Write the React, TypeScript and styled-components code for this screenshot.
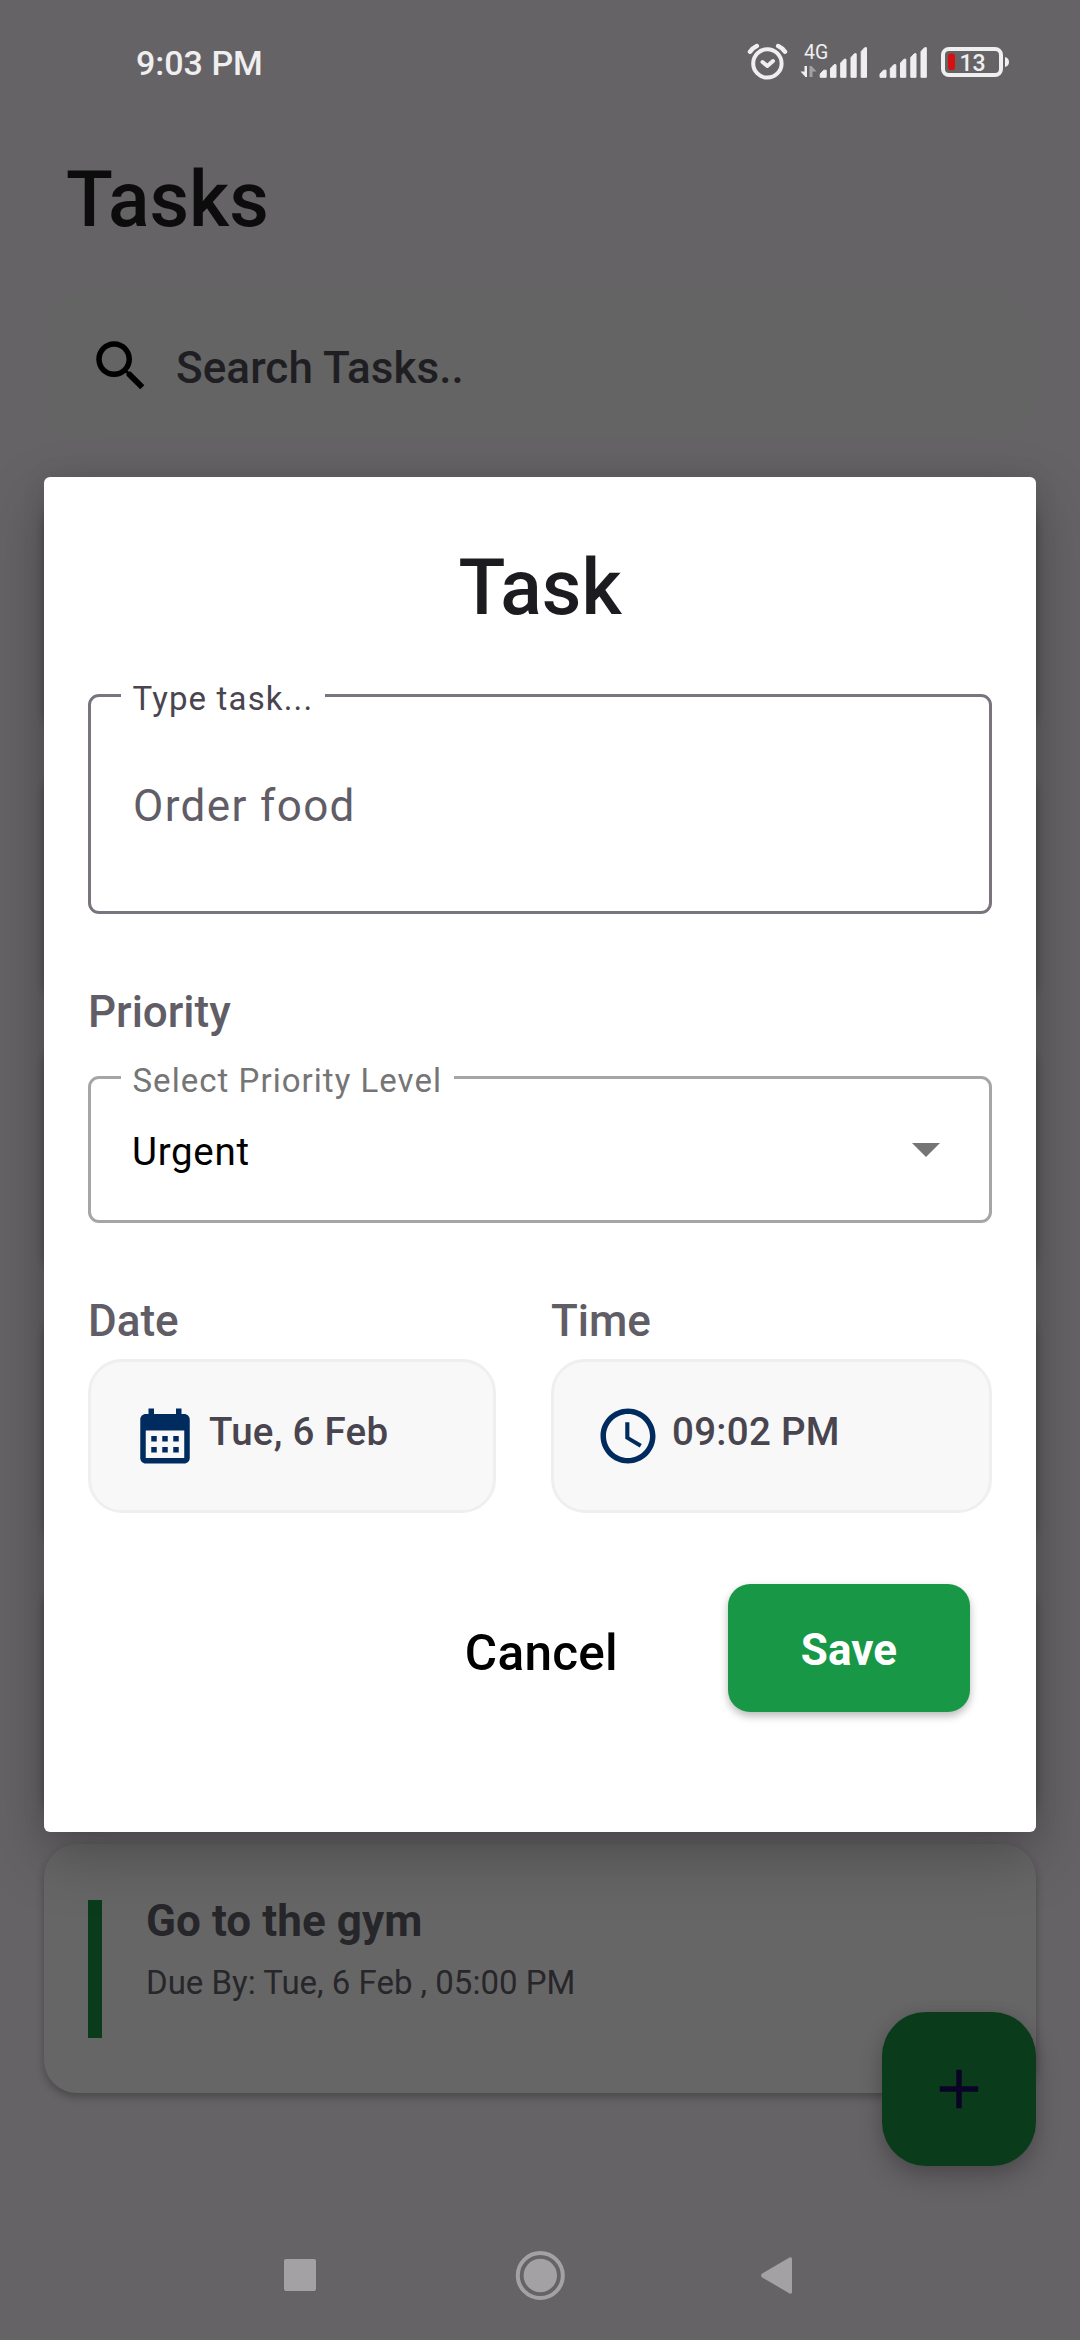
import React from "react";
import styled, { createGlobalStyle } from "styled-components";

const GlobalStyle = createGlobalStyle`
  * { box-sizing: border-box; }
  body { margin: 0; background: #666367; }
  button { border: 0; padding: 0; background: none; font-family: inherit; }
`;

const Screen = styled.div`
  position: relative;
  width: 1080px;
  height: 2340px;
  display: flex;
  flex-direction: column;
  overflow: hidden;
  background: #666367;
  font-family: Roboto, "Liberation Sans", sans-serif;
`;

const StatusBar = styled.header`
  height: 126px;
  padding: 0 70px 0 136px;
  display: flex;
  justify-content: space-between;
  color: #f0eff0;
`;

const Clock = styled.span`
  padding-top: 43px;
  font-size: 34px;
  line-height: 40px;
  font-weight: 500;
  white-space: nowrap;
`;

const StatusIcons = styled.svg`
  display: block;
  width: 270px;
  height: 126px;
  flex: none;
`;

const PageTitle = styled.h1`
  margin: 29px 0 0 66px;
  font-size: 77px;
  line-height: 90px;
  font-weight: 500;
  color: #0c0c0d;
`;

const SearchBar = styled.div`
  margin: 45px 44px 0;
  height: 152px;
  padding: 0 44px;
  display: flex;
  align-items: center;
  gap: 22px;
  border-radius: 44px;
  background: #636463;
`;

const SearchHint = styled.span`
  font-size: 44px;
  line-height: 52px;
  padding-top: 3px;
  font-weight: 500;
  letter-spacing: 0.07px;
  color: #1f1e23;
`;

const Glyph = styled.svg<{ $color: string }>`
  display: block;
  flex: none;
  width: 66px;
  height: 66px;
  fill: ${(p) => p.$color};
`;

const TaskList = styled.main`
  flex: 1;
  padding: 0 44px 99px;
  display: flex;
  flex-direction: column;
  justify-content: flex-end;
  gap: 22px;
`;

const TaskCard = styled.article`
  height: 249px;
  flex: none;
  padding: 56px 44px 55px;
  display: flex;
  gap: 44px;
  border-radius: 33px;
  background: #666;
  box-shadow: 0 4px 8px rgba(0, 0, 0, 0.28);
`;

const PriorityStripe = styled.div`
  width: 14px;
  background: #0a3c1c;
`;

const TaskText = styled.div`
  display: flex;
  flex-direction: column;
  color: #26262b;
`;

const TaskName = styled.h2`
  margin: -5px 0 0;
  font-size: 44px;
  line-height: 52px;
  font-weight: 700;
  letter-spacing: 0.07px;
`;

const TaskDue = styled.p`
  margin: 16px 0 0;
  font-size: 33px;
  line-height: 39px;
`;

const AddButton = styled.button`
  position: absolute;
  right: 44px;
  bottom: 174px;
  width: 154px;
  height: 154px;
  display: grid;
  place-items: center;
  border-radius: 44px;
  background: #0a3c1c;
  box-shadow: 0 12px 24px rgba(0, 0, 0, 0.22), 0 0 14px rgba(0, 0, 0, 0.08);
`;

const NavBar = styled.nav`
  height: 148px;
  display: flex;
`;

const NavDrawing = styled.svg`
  display: block;
  width: 1080px;
  height: 148px;
`;

const Overlay = styled.div`
  position: absolute;
  inset: 0;
  padding: 477px 44px 508px;
  display: flex;
`;

const Dialog = styled.section`
  flex: 1;
  padding: 0 44px;
  display: flex;
  flex-direction: column;
  border-radius: 6px;
  background: #fff;
  box-shadow: 0 24px 60px rgba(0, 0, 0, 0.25), 0 0 24px rgba(0, 0, 0, 0.09);
`;

const DialogTitle = styled.h2`
  margin: 66px 0 0;
  text-align: center;
  font-size: 77px;
  line-height: 90px;
  font-weight: 500;
  color: #1c1b1f;
`;

const Outlined = styled.div<{ $height: number; $top: number; $color: string }>`
  position: relative;
  margin-top: ${(p) => p.$top}px;
  height: ${(p) => p.$height}px;
  padding: 0 42px 0 41px;
  display: flex;
  align-items: center;
  justify-content: space-between;
  border: 3px solid ${(p) => p.$color};
  border-radius: 11px;
`;

const FloatingLabel = styled.span<{ $color: string; $tracking: number }>`
  position: absolute;
  top: -18px;
  left: 30px;
  padding: 0 12px 0 11.5px;
  background: #fff;
  font-size: 33px;
  line-height: 39px;
  letter-spacing: ${(p) => p.$tracking}px;
  white-space: nowrap;
  color: ${(p) => p.$color};
`;

const TaskValue = styled.span`
  padding: 3px 0 0 1px;
  font-size: 44px;
  line-height: 52px;
  letter-spacing: 1.375px;
  color: #605d66;
`;

const LevelValue = styled.span`
  padding-top: 4px;
  font-size: 38.5px;
  line-height: 45px;
  letter-spacing: 0.7px;
  color: #000;
`;

const SelectArrow = styled.svg`
  display: block;
  width: 28px;
  height: 14px;
  margin-right: 7px;
  fill: #757575;
`;

const Caption = styled.span`
  font-size: 44px;
  line-height: 52px;
  font-weight: 500;
  color: #605d66;
`;

const PriorityCaption = styled(Caption)`
  margin-top: 72px;
`;

const PickerRow = styled.div`
  margin-top: 72px;
  display: flex;
  gap: 55px;
`;

const PickerColumn = styled.div<{ $width: number }>`
  width: ${(p) => p.$width}px;
  display: flex;
  flex-direction: column;
  gap: 12px;
`;

const PickerBox = styled.div`
  height: 154px;
  padding: 0 41px;
  display: flex;
  align-items: center;
  gap: 11px;
  border: 3px solid #efefef;
  border-radius: 34px;
  background: #f8f8f8;
`;

const PickerText = styled.span`
  font-size: 38.5px;
  line-height: 45px;
  padding-bottom: 10px;
  font-weight: 500;
  letter-spacing: 0.275px;
  color: #49454f;
  white-space: nowrap;
`;

const Actions = styled.div`
  margin: 71px 22px 0 0;
  display: flex;
  justify-content: flex-end;
  align-items: flex-start;
  gap: 110px;
`;

const CancelButton = styled.button`
  margin-top: 40px;
  font-size: 49.5px;
  line-height: 58px;
  font-weight: 500;
  letter-spacing: 0.275px;
  color: #000;
`;

const SaveButton = styled.button`
  width: 242px;
  height: 128px;
  border-radius: 22px;
  background: #189846;
  color: #fff;
  font-size: 44px;
  line-height: 52px;
  padding-top: 3px;
  font-weight: 700;
  letter-spacing: 0.1px;
  box-shadow: 0 4px 8px rgba(0, 0, 0, 0.28);
`;

const signalBars = [
  { x: 0, top: 69.5, width: 7 },
  { x: 10.3, top: 64, width: 6.5 },
  { x: 20.5, top: 58.5, width: 6.3 },
  { x: 30.8, top: 53, width: 6.2 },
  { x: 41, top: 47, width: 6.3 },
];

const Signal = ({ x }: { x: number }) => (
  <g fill="#f0eff0" stroke="#f0eff0" strokeWidth="1" strokeLinejoin="round">
    {signalBars.map((b) => (
      <path
        key={b.x}
        d={`M${x + b.x + 0.5} 77.3V${b.top + 4.5}L${x + b.x + 4} ${b.top + 0.7}H${x + b.x + b.width - 0.5}V77.3Z`}
      />
    ))}
  </g>
);

const hiddenTasks = [1, 2, 3, 4, 5];

const StatusGlyphs = () => (
  <StatusIcons viewBox="740 0 270 126">
    <g fill="none" stroke="#f0eff0" strokeWidth="4" strokeLinecap="round" strokeLinejoin="round">
      <circle cx="767.4" cy="63.4" r="14.2" />
      <path d="M762.500 62L767.300 66L773 61" />
      <path strokeWidth="4.500" d="M750 51.700Q752.500 48 756.800 46M785 51.700Q782.500 48 778.200 46" />
    </g>
    <text x="804" y="59" fontFamily="Roboto" fontSize="19.5" fill="#f0eff0">4G</text>
    <path d="M804.500 66H807V77H805.500L800.500 71.500H804.500Z" fill="#f0eff0" />
    <path d="M809.500 66H811.500L816.500 71.500H812.500V77H809.500Z" fill="#a3a1a3" />
    <Signal x={819.7} />
    <Signal x={879.5} />
    <rect x="943" y="49" width="58" height="26" rx="6" fill="none" stroke="#f0eff0" strokeWidth="4" />
    <rect x="948" y="53.500" width="7" height="16.500" rx="2.500" fill="#d60f10" />
    <path d="M1005 57Q1009 58 1009 62Q1009 66 1005 67Z" fill="#f0eff0" />
    <text x="959.5" y="70.7" fontFamily="Roboto" fontWeight="500" fontSize="23" fill="#f0eff0">13</text>
  </StatusIcons>
);

export default function App() {
  return (
    <>
      <GlobalStyle />
      <Screen>
        <StatusBar>
          <Clock>9:03 PM</Clock>
          <StatusGlyphs />
        </StatusBar>
        <PageTitle>Tasks</PageTitle>
        <SearchBar>
          <Glyph viewBox="0 0 24 24" $color="#000">
            <path d="M15.5 14h-.79l-.28-.27C15.41 12.59 16 11.11 16 9.5 16 5.91 13.09 3 9.5 3S3 5.91 3 9.5 5.91 16 9.5 16c1.61 0 3.09-.59 4.23-1.57l.27.28v.79l5 4.99L20.49 19l-4.99-5zm-6 0C7.01 14 5 11.99 5 9.5S7.01 5 9.5 5 14 7.01 14 9.5 11.99 14 9.5 14z" />
          </Glyph>
          <SearchHint>Search Tasks..</SearchHint>
        </SearchBar>
        <TaskList>
          {hiddenTasks.map((id) => (
            <TaskCard key={id} />
          ))}
          <TaskCard>
            <PriorityStripe />
            <TaskText>
              <TaskName>Go to the gym</TaskName>
              <TaskDue>Due By: Tue, 6 Feb , 05:00 PM</TaskDue>
            </TaskText>
          </TaskCard>
        </TaskList>
        <NavBar>
          <NavDrawing viewBox="0 2192 1080 148">
            <g fill="#a3a1a3">
              <rect x="284" y="2259" width="32" height="32" rx="2" />
              <circle cx="540.3" cy="2275.5" r="16.7" />
              <path d="M762.2 2273.6L789.5 2257.6Q792 2256.5 792 2259V2292Q792 2294.500 789.500 2293.400L762.200 2277.400Q760 2275.500 762.200 2273.600Z" />
            </g>
            <circle cx="540.3" cy="2275.500" r="22.500" fill="none" stroke="#a3a1a3" strokeWidth="4" />
          </NavDrawing>
        </NavBar>
        <AddButton aria-label="Add task">
          <Glyph viewBox="0 0 24 24" $color="#0b0325">
            <path d="M19 13h-6v6h-2v-6H5v-2h6V5h2v6h6v2z" />
          </Glyph>
        </AddButton>

        <Overlay>
          <Dialog>
            <DialogTitle>Task</DialogTitle>
            <Outlined $height={220} $top={61} $color="#79747e">
              <FloatingLabel $color="#49454f" $tracking={1.15}>Type task...</FloatingLabel>
              <TaskValue>Order food</TaskValue>
            </Outlined>
            <PriorityCaption>Priority</PriorityCaption>
            <Outlined $height={147} $top={38} $color="#a6a6a6">
              <FloatingLabel $color="#757575" $tracking={1.03}>Select Priority Level</FloatingLabel>
              <LevelValue>Urgent</LevelValue>
              <SelectArrow viewBox="0 0 28 14">
                <path d="M0 0H28L14 14Z" />
              </SelectArrow>
            </Outlined>
            <PickerRow>
              <PickerColumn $width={408}>
                <Caption>Date</Caption>
                <PickerBox>
                  <Glyph viewBox="0 0 24 24" $color="#002b5f">
                    <path d="M19 4h-1V2h-2v2H8V2H6v2H5c-1.110 0-1.990.9-1.990 2L3 20c0 1.100.89 2 2 2h14c1.100 0 2-.9 2-2V6c0-1.100-.9-2-2-2zm0 16H5V10h14v10zM9 14H7v-2h2v2zm4 0h-2v-2h2v2zm4 0h-2v-2h2v2zm-8 4H7v-2h2v2zm4 0h-2v-2h2v2zm4 0h-2v-2h2v2z" />
                  </Glyph>
                  <PickerText>Tue, 6 Feb</PickerText>
                </PickerBox>
              </PickerColumn>
              <PickerColumn $width={441}>
                <Caption>Time</Caption>
                <PickerBox>
                  <Glyph viewBox="0 0 24 24" $color="#002b5f">
                    <path d="M11.990 2C6.470 2 2 6.480 2 12s4.470 10 9.990 10C17.520 22 22 17.520 22 12S17.520 2 11.990 2zM12 20c-4.420 0-8-3.580-8-8s3.580-8 8-8 8 3.580 8 8-3.580 8-8 8zm.5-13H11v6l5.250 3.150.75-1.230-4.500-2.670z" />
                  </Glyph>
                  <PickerText>09:02 PM</PickerText>
                </PickerBox>
              </PickerColumn>
            </PickerRow>
            <Actions>
              <CancelButton>Cancel</CancelButton>
              <SaveButton>Save</SaveButton>
            </Actions>
          </Dialog>
        </Overlay>
      </Screen>
    </>
  );
}
